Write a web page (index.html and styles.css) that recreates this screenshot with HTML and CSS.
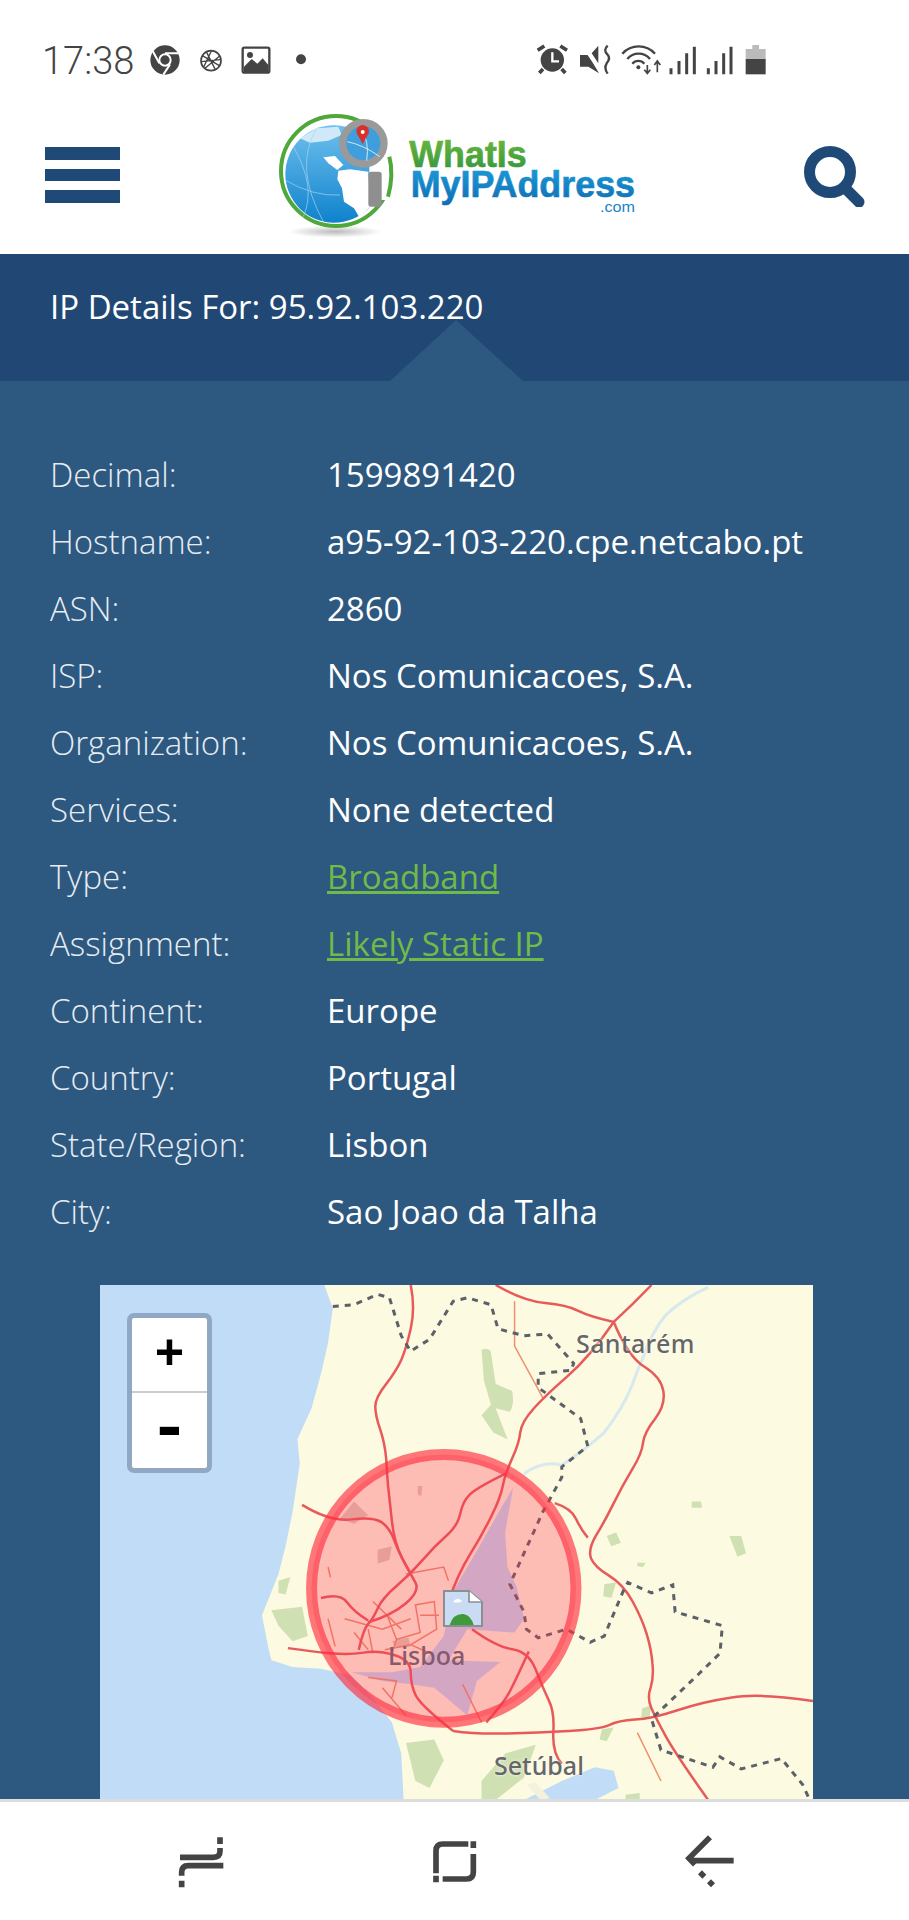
FILE: index.html
```html
<!DOCTYPE html>
<html lang="en">
<head>
  <meta charset="UTF-8">
  <meta name="viewport" content="width=device-width, initial-scale=1.0">
  <title>WhatIsMyIPAddress - IP Details</title>
  <link rel="stylesheet" href="styles.css">
</head>
<body>
  <!-- phone status bar -->
  <div class="status">
    <span class="time">17:38</span>
    <svg class="status-left" viewBox="0 0 540 150">
      <circle cx="75" cy="75" r="44" fill="#444"/>
      <circle cx="75" cy="75" r="17" fill="#444" stroke="#fff" stroke-width="6"/>
      <path d="M75 55 L116 55 M58 85 L38 48 M90 88 L70 119" stroke="#fff" stroke-width="6" fill="none"/>
      <circle cx="213" cy="77" r="30" fill="#fff" stroke="#444" stroke-width="5"/>
      <path d="M187 62 L238 92 M184 80 L240 74 M195 100 L240 62 M200 52 L226 104 M214 48 L190 98" stroke="#444" stroke-width="4" fill="none"/>
      <rect x="308" y="38" width="80" height="75" rx="5" fill="#fff" stroke="#444" stroke-width="7"/>
      <circle cx="330" cy="60" r="9" fill="#444"/>
      <path d="M312 112 V95 L335 72 L352 86 L368 70 L385 90 V112Z" fill="#444"/>
      <circle cx="483" cy="73" r="15" fill="#444"/>
    </svg>
    <svg class="status-right" viewBox="0 0 750 150">
      <circle cx="82" cy="75" r="35" fill="#444"/>
      <path d="M82 52 V79 H102" stroke="#fff" stroke-width="7" fill="none"/>
      <path d="M38 46 L58 33 M126 46 L106 33 M54 102 L43 114 M110 102 L121 114" stroke="#444" stroke-width="11" fill="none"/>
      <path d="M165 60 H190 L222 115 L190 95 H165Z M200 55 L220 32 V85Z" fill="#444"/>
      <path d="M170 32 L222 105" stroke="#fff" stroke-width="4"/>
      <path d="M248 32 Q234 45 247 58 Q258 70 245 85 Q236 100 248 116" stroke="#444" stroke-width="7" fill="none"/>
      <path d="M292 56 A66 66 0 0 1 390 56 M307 72 A44 44 0 0 1 375 72 M322 86 A24 24 0 0 1 358 86" stroke="#444" stroke-width="7" fill="none"/>
      <circle cx="340" cy="97" r="6" fill="#444"/>
      <path d="M367 90 V112 M358 104 L367 115 L376 104 M397 112 V82 M388 90 L397 78 L406 90" stroke="#444" stroke-width="5" fill="none"/>
      <path d="M438 118 V100 M462 118 V78 M485 118 V55 M508 118 V35 M550 118 V100 M573 118 V78 M596 118 V55 M618 118 V35" stroke="#444" stroke-width="9"/>
      <path d="M682 30 H702 V42 H722 V72 H662 V42 H682Z" fill="#bbb"/>
      <path d="M662 72 H722 V118 H662Z" fill="#444"/>
    </svg>
  </div>

  <header class="topbar">
    <div class="burger"><span></span><span></span><span></span></div>
    <svg class="logo" viewBox="0 0 1200 450">
      <defs>
        <linearGradient id="sea" x1="0" y1="0" x2="0" y2="1">
          <stop offset="0" stop-color="#6fc0ee"/>
          <stop offset="1" stop-color="#0f82cc"/>
        </linearGradient>
        <linearGradient id="lgreen" x1="0" y1="0" x2="0" y2="1">
          <stop offset="0" stop-color="#74bb3a"/>
          <stop offset="1" stop-color="#2f9440"/>
        </linearGradient>
        <linearGradient id="lblue" x1="0" y1="0" x2="0" y2="1">
          <stop offset="0" stop-color="#1ba0dc"/>
          <stop offset="1" stop-color="#0f6db4"/>
        </linearGradient>
        <radialGradient id="shade">
          <stop offset="0" stop-color="#bbb"/>
          <stop offset="1" stop-color="#fff"/>
        </radialGradient>
      </defs>
      <ellipse cx="225" cy="395" rx="140" ry="18" fill="url(#shade)"/>
      <circle cx="228" cy="213" r="165" fill="#fff" stroke="#4ea83a" stroke-width="12"/>
      <circle cx="222" cy="222" r="146" fill="url(#sea)"/>
      <path d="M235 212 L270 208 L325 215 L330 320 L298 352 L282 325 L252 305 L246 265 L232 238Z" fill="#fff"/>
      <path d="M190 172 L225 168 L250 195 L232 210 L205 190Z" fill="#fff"/>
      <path d="M120 115 L170 85 L235 80 L245 105 L205 122 L150 128Z" fill="#cfe9f8"/>
      <path d="M100 140 Q170 260 130 350 M170 85 Q100 200 190 365 M75 240 Q160 290 240 285" fill="none" stroke="#a6d6f3" stroke-width="2"/>
      <rect x="328" y="60" width="70" height="240" fill="#fff"/>
      <circle cx="310" cy="130" r="62" fill="#3f9fdc" stroke="#9a9a9a" stroke-width="22"/>
      <path d="M262 125 Q310 135 360 170 M300 78 Q330 125 320 182" fill="none" stroke="#cfe9f8" stroke-width="3"/>
      <path d="M308 132 L290 100 A19 19 0 1 1 326 100Z" fill="#d6322b"/>
      <circle cx="308" cy="96" r="6" fill="#fff"/>
      <rect x="325" y="215" width="40" height="105" rx="8" fill="#8f8f8f"/>
      <path d="M388 170 Q402 225 384 290" fill="none" stroke="#4ea83a" stroke-width="12"/>
      <text class="logo-word" x="448" y="200" fill="url(#lgreen)" stroke="url(#lgreen)" textLength="352" lengthAdjust="spacingAndGlyphs">WhatIs</text>
      <text class="logo-word" x="452" y="291" fill="url(#lblue)" stroke="url(#lblue)" textLength="673" lengthAdjust="spacingAndGlyphs">MyIPAddress</text>
      <text class="logo-com" x="1020" y="335" textLength="105" lengthAdjust="spacingAndGlyphs">.com</text>
    </svg>
    <svg class="search" viewBox="0 0 61 61">
      <circle cx="26" cy="26" r="20.5" fill="none" stroke="#1f4a78" stroke-width="11"/>
      <path d="M41 42 L55 56" stroke="#1f4a78" stroke-width="11" stroke-linecap="round"/>
    </svg>
  </header>

  <div class="title">IP Details For: 95.92.103.220</div>

  <main class="details">
    <dl class="rows">
      <dt>Decimal:</dt><dd>1599891420</dd>
      <dt>Hostname:</dt><dd>a95-92-103-220.cpe.netcabo.pt</dd>
      <dt>ASN:</dt><dd>2860</dd>
      <dt>ISP:</dt><dd>Nos Comunicacoes, S.A.</dd>
      <dt>Organization:</dt><dd>Nos Comunicacoes, S.A.</dd>
      <dt>Services:</dt><dd>None detected</dd>
      <dt>Type:</dt><dd><a href="#">Broadband</a></dd>
      <dt>Assignment:</dt><dd><a href="#">Likely Static IP</a></dd>
      <dt>Continent:</dt><dd>Europe</dd>
      <dt>Country:</dt><dd>Portugal</dd>
      <dt>State/Region:</dt><dd>Lisbon</dd>
      <dt>City:</dt><dd>Sao Joao da Talha</dd>
    </dl>

    <div class="map">
      <svg class="map-art" viewBox="22 43 1510 1492" preserveAspectRatio="none">
        <path class="land" d="M497 43 L515 110 L505 210 L490 300 L470 400 L440 490 L445 560 L430 700 L415 800 L400 880 L365 1000 L378 1090 L385 1130 L430 1150 L490 1155 L555 1175 L600 1240 L640 1310 L660 1400 L665 1535 H1532 V43Z"/>
        <path class="water" d="M555 1165 L640 1165 L700 1150 L750 1060 L770 930 L830 790 L875 680 L897 630 L880 760 L885 860 L905 920 L920 1010 L900 1050 L800 1040 L760 1130 L870 1135 L820 1190 L800 1290 L730 1210 L680 1200 L620 1190Z"/>
        <path class="water" d="M920 1535 L1000 1480 L1070 1440 L1110 1450 L1120 1500 L1070 1535Z"/>
        <path class="sand" d="M925 1490 L945 1485 L975 1530 L955 1535Z"/>
        <path class="river" d="M920 590 Q960 550 1000 565 Q1050 520 1090 470 Q1130 400 1150 330 Q1160 290 1170 260 Q1190 180 1220 130 Q1260 80 1310 50"/>

        <path class="wood" d="M830 230 Q850 225 850 240 L860 330 L895 350 Q900 390 890 410 L860 400 L885 490 L855 470 L830 420 L850 390 L835 320Z"/>
        <path class="wood" d="M400 900 L425 890 L415 940 L400 935Z M385 985 L450 975 L462 1060 L430 1075 L400 1030Z"/>
        <path class="wood" d="M1095 770 L1115 760 L1125 790 L1105 800Z M1355 770 L1380 770 L1390 820 L1372 830Z M1275 670 L1295 670 L1297 688 L1275 688Z M1090 910 L1115 905 L1105 950 L1088 945Z M1160 848 L1178 848 L1172 860 L1160 858Z"/>
        <path class="wood" d="M670 1370 L730 1360 L750 1420 L720 1500 L690 1480Z M830 1480 L880 1400 L945 1375 L920 1470 L860 1535 L830 1535Z M1085 1330 L1110 1325 L1095 1365 L1080 1360Z M1170 1270 L1190 1260 L1185 1300 L1168 1295Z M1135 1520 L1165 1515 L1165 1535 L1135 1535Z"/>
        <path class="town" d="M530 720 L560 670 L590 710 L560 735Z M640 1075 L675 1065 L680 1090 L650 1095Z M695 625 L705 625 L702 655 L695 650Z M610 810 L640 800 L635 840 L610 850Z"/>

        <path class="thin" d="M505 1010 L520 1090 M560 1050 L590 1100 M630 1000 L650 1070 L700 1050 L690 970 L730 960 L735 1040 L680 1085 L625 1100 M505 860 L510 890 M670 880 L750 860 L760 900 M590 1180 L650 1190 L640 1240 M620 1210 L670 1290 M790 1200 L830 1310 M900 90 L900 220 L960 370 M1160 1340 L1210 1480 M540 1010 L620 1040 L680 1010 M600 960 L660 1040 M700 1000 L740 1000 M590 1040 L600 1110 M650 1070 L640 1110 M680 1085 L720 1110"/>
        <path class="road" d="M680 43 Q690 110 680 170 Q670 230 660 260 Q650 290 628 330 Q605 370 605 395 Q605 420 615 460 Q625 500 628 545 Q630 590 632 625 Q635 660 640 725 Q645 790 662 835 Q680 880 690 905 Q700 930 670 965 Q640 1000 590 1020"/>
        <path class="road" d="M860 43 Q920 90 965 95 Q1010 100 1035 118 Q1060 135 1110 150 M1110 150 Q1150 100 1190 43"/>
        <path class="road" d="M1110 150 Q1140 250 1175 280 Q1210 310 1215 350 Q1220 390 1198 430 Q1175 470 1172 500 Q1170 530 1150 575 Q1130 620 1110 675 Q1090 730 1072 770 Q1055 810 1062 835 Q1070 860 1100 885 Q1130 910 1150 960 Q1170 1010 1180 1055 Q1190 1100 1192 1140 Q1195 1180 1188 1210 Q1180 1240 1190 1270 Q1200 1300 1220 1350 Q1240 1400 1310 1535"/>
        <path class="road" d="M1110 150 Q1060 250 1010 310 Q960 370 938 405 Q915 440 912 470 Q910 500 895 545 Q880 590 875 625 Q870 660 850 715 Q830 770 805 825 Q780 880 760 960"/>
        <path class="road" d="M880 590 Q820 630 805 650 Q790 670 785 705 Q780 740 755 770 Q730 800 705 840 Q680 880 650 915 Q620 950 610 980 Q600 1010 590 1025 Q580 1040 570 1100"/>
        <path class="road" d="M450 680 Q510 730 555 722 Q600 715 618 730 Q635 745 645 782 Q655 820 680 880"/>
        <path class="road" d="M490 950 Q530 935 545 962 Q560 990 590 1015 M420 1095 Q470 1105 510 1110 Q550 1115 580 1108 Q610 1100 645 1115 Q680 1130 680 1165 Q680 1200 690 1230 Q700 1260 770 1335"/>
        <path class="road" d="M810 1040 Q860 1090 895 1098 Q930 1105 945 1158 Q960 1210 972 1245 Q985 1280 982 1340 Q980 1400 1000 1430 M930 1105 Q905 1180 892 1215 Q880 1250 840 1310"/>
        <path class="road" d="M770 1335 Q820 1345 885 1342 Q950 1340 1015 1335 Q1080 1330 1100 1318 Q1120 1305 1155 1302 Q1190 1300 1245 1275 Q1300 1250 1360 1238 Q1420 1225 1532 1248 M985 675 Q1020 690 1030 720 Q1040 750 1055 775"/>
        <path class="border" d="M515 105 L560 100 L610 70 L635 80 L660 190 L680 235 L720 200 L770 90 L800 80 L850 100 L865 170 L920 190 L970 185 L1025 270 L1020 290 L950 300 L950 340 L1040 430 L1055 510 L1000 570 L1000 600 L960 700 L920 820 L890 910 L920 990 L925 1040 L950 1065 L1010 1040 L1060 1078 L1090 1060 L1130 930 L1140 905 L1190 935 L1235 912 L1240 990 L1340 1030 L1335 1110 L1290 1170 L1190 1300 L1210 1390 L1320 1440 L1335 1410 L1380 1445 L1465 1415 L1510 1490 L1525 1535"/>

        <ellipse class="range" cx="750" cy="922" rx="280" ry="388"/>
      </svg>

      <span class="place place-santarem">Santarém</span>
      <span class="place place-lisboa">Lisboa</span>
      <span class="place place-setubal">Setúbal</span>

      <!-- the missing marker picture -->
      <svg class="marker" viewBox="0 0 120 111">
        <path d="M3 3 H78 L117 36 V108 H3Z" fill="#c9dcf4" stroke="#8b8f93" stroke-width="6"/>
        <path d="M78 3 V36 H117" fill="#fff" stroke="#8b8f93" stroke-width="5"/>
        <path d="M30 36 Q44 18 58 34 Q48 40 30 36Z" fill="#fff"/>
        <path d="M20 105 Q30 70 62 72 Q84 76 92 105Z" fill="#3e9a3a"/>
      </svg>

      <div class="zoom">
        <button class="zoom-in">+</button>
        <button class="zoom-out">-</button>
      </div>
    </div>
  </main>

  <!-- phone nav buttons -->
  <nav class="softkeys">
    <svg viewBox="0 0 240 225">
      <path d="M45 100 H145 Q165 100 165 82 V72 M165 40 V60 M175 125 H70 Q50 125 50 145 V155 M50 170 V190" fill="none" stroke="#444" stroke-width="17"/>
    </svg>
    <svg viewBox="0 0 240 225">
      <path d="M48 148 V80 Q48 60 68 60 H145 M160 52 V72 M160 90 V145 Q160 165 140 165 H68 M48 155 V175" fill="none" stroke="#444" stroke-width="17"/>
    </svg>
    <svg viewBox="0 0 240 225">
      <path d="M105 40 L42 103 L60 122 M50 110 H176 M75 145 L88 158 M102 172 L114 184" fill="none" stroke="#444" stroke-width="17"/>
    </svg>
  </nav>
</body>
</html>
```

FILE: styles.css
```css
html, body { margin:0; padding:0; }
body { width:909px; height:1920px; overflow:hidden; background:#fff; font-family:"Open Sans", sans-serif; display:flex; flex-direction:column; }

/* status bar */
.status { height:100px; flex:none; display:flex; align-items:flex-start; padding-left:42px; color:#444; box-sizing:border-box; }
.time { width:98px; font-family:Roboto, sans-serif; font-weight:300; font-size:38px; line-height:38px; margin-top:42px; }
.status-left { width:180px; height:50px; margin-top:35px; }
.status-right { width:250px; height:50px; margin-top:35px; margin-left:205px; }

/* logo row */
.topbar { height:154px; flex:none; display:flex; align-items:flex-start; position:relative; }
.burger { width:75px; margin:47px 0 0 45px; display:flex; flex-direction:column; gap:9px; }
.burger span { display:block; height:12.5px; background:#1f4a78; }
.logo { width:400px; height:150px; margin-left:140px; }
.search { width:61px; height:61px; margin:46px 0 0 144px; }
.logo-word { font-family:"Liberation Sans", sans-serif; font-weight:bold; font-size:112px; stroke-width:2; }
.logo-com { font-family:"Liberation Sans", sans-serif; font-size:46px; fill:#1b84c6; }

/* heading band */
.title { height:127px; flex:none; box-sizing:border-box; background:#214874; color:#fff; font-size:33px; font-weight:400; line-height:34px; padding:36px 0 0 50px; position:relative; }
.title::after { content:""; position:absolute; left:390px; bottom:0; border-style:solid; border-width:0 67px 61px 66px; border-color:transparent transparent #2d5880 transparent; }

/* ip rows */
.details { flex:1; min-height:0; overflow:hidden; background:#2d5880; padding-top:60px; }
.rows { margin:0; padding-left:50px; display:grid; grid-template-columns:277px 1fr; grid-auto-rows:67px; align-items:center; font-size:33px; color:#fff; }
.rows dt { font-weight:300; color:#e6ecf2; }
.rows dd { margin:0; font-weight:400; }
.rows a { color:#70bb48; }

/* map */
.map { width:713px; height:515px; margin:40px 0 0 100px; position:relative; background:#c1dcf6; overflow:hidden; }
.map-art { display:block; width:100%; height:100%; filter:blur(.6px); }
.map-art * { vector-effect:non-scaling-stroke; }
.land { fill:#fcfae0; }
.water { fill:#c1dcf6; }
.sand { fill:#f4f2dc; }
.river { fill:none; stroke:#d8e9ee; stroke-width:3; }
.wood { fill:#cfe0b2; }
.town { fill:#e0cdb8; }
.thin { fill:none; stroke:#ee9070; stroke-width:1.5; }
.road { fill:none; stroke:#e85a5a; stroke-width:2.5; stroke-linejoin:round; }
.border { fill:none; stroke:#5c6068; stroke-width:3; stroke-dasharray:6 6; }
.range { fill:#ff3050; fill-opacity:.3; stroke:#ff3040; stroke-opacity:.65; stroke-width:11; }

.place { position:absolute; font-family:"Noto Sans", sans-serif; font-size:25px; line-height:28px; font-weight:500; color:#666; text-shadow:0 0 3px #fff; }
.place-santarem { left:476px; top:44px; letter-spacing:.4px; }
.place-lisboa { left:288px; top:356px; color:#86596c; text-shadow:none; }
.place-setubal { left:394px; top:466px; }

.marker { position:absolute; left:343px; top:305px; width:40px; height:37px; }

.zoom { position:absolute; left:27px; top:28px; width:75px; border:5px solid #90a8c4; border-radius:7px; background:#fff; display:flex; flex-direction:column; }
.zoom button { height:75px; border:0; padding:0; background:#fff; border-radius:5px; color:#000; font-family:"Liberation Mono", monospace; font-weight:bold; font-size:50px; line-height:75px; }
.zoom .zoom-in { border-bottom:2px solid #ccc; border-radius:5px 5px 0 0; }
.zoom .zoom-out { font-size:68px; }

/* nav buttons */
.softkeys { height:121px; flex:none; box-sizing:border-box; background:#fff; border-top:3px solid #ddd; display:flex; gap:175px; padding:22px 0 0 165px; }
.softkeys svg { width:80px; height:75px; }
```
